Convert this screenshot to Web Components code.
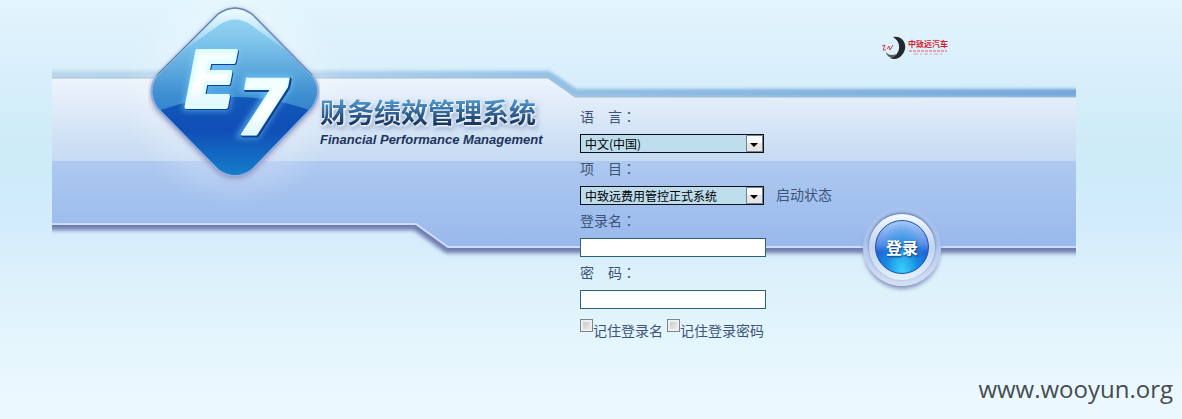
<!DOCTYPE html>
<html lang="zh-CN">
<head>
<meta charset="utf-8">
<title>财务绩效管理系统</title>
<style>
html, body { margin: 0; }
body { font-family: "Noto Sans CJK SC", sans-serif; font-size: 14px; color: #3d5478; }
</style>
</head>
<body>
<login-page>
  <brand-mark slot="brand"></brand-mark>
  <login-form slot="form">
    <form-field>
      <drop-down caption="语　言" options="中文(中国)"></drop-down>
    </form-field>
    <form-field>
      <drop-down caption="项　目" options="中致远费用管控正式系统"></drop-down>
      <a slot="aside" href="#status">启动状态</a>
    </form-field>
    <form-field>
      <text-box caption="登录名" type="text"></text-box>
    </form-field>
    <form-field>
      <text-box caption="密　码" type="password"></text-box>
    </form-field>
    <tick-box slot="options">记住登录名</tick-box>
    <tick-box slot="options">记住登录密码</tick-box>
  </login-form>
  <company-logo slot="side">中致远汽车</company-logo>
  <login-button slot="side">登录</login-button>
  <span slot="footer">www.wooyun.org</span>
</login-page>

<script>
function define(name, html, setup) {
  const template = document.createElement('template');
  template.innerHTML = html;
  customElements.define(name, class extends HTMLElement {
    connectedCallback() {
      if (this.shadowRoot) return;
      const root = this.attachShadow({ mode: 'open' });
      root.appendChild(template.content.cloneNode(true));
      if (setup) setup(this, root);
    }
  });
}

define('login-page', `
<style>
:host { display: flex; flex-direction: column; min-height: 100vh;
  background: linear-gradient(#e3f5fd 0, #d9effb 70px, #cdebf8 155px, #d4ecfc 230px, #def2fa 290px, #ebf8ff 400px); }
.stage { display: grid; grid-template-columns: 528px 283px 1fr; margin: 0 106px 0 52px; }
page-banner { grid-area: 1 / 1 / 2 / 4; }
.brand { grid-area: 1 / 1; }
.form { grid-area: 1 / 2; padding-top: 101px; }
.side { grid-area: 1 / 3; padding-top: 35px; }
.brand, .form, .side { position: relative; }
footer { margin-top: auto; padding: 0 9px 12px; text-align: right; color: #474c50;
  font: 24px/36px "Open Sans", "Noto Sans", sans-serif; }
</style>
<main class="stage">
  <page-banner></page-banner>
  <div class="brand"><slot name="brand"></slot></div>
  <div class="form"><slot name="form"></slot></div>
  <div class="side"><slot name="side"></slot></div>
</main>
<footer><slot name="footer"></slot></footer>`);

define('page-banner', `
<style>
:host { display: block; min-width: 0; overflow: hidden; }
svg { display: block; width: 100%; height: 340px; }
</style>
<svg aria-hidden="true">
  <defs>
    <linearGradient id="body" gradientUnits="userSpaceOnUse" x1="0" y1="78" x2="0" y2="248">
      <stop offset="0" stop-color="#edf4fc"/><stop offset=".488" stop-color="#c5daf2"/>
      <stop offset=".488" stop-color="#adc9f0"/><stop offset="1" stop-color="#99b8ec"/>
    </linearGradient>
    <linearGradient id="edge" gradientUnits="userSpaceOnUse" x1="0" y1="0" x2="1024" y2="0">
      <stop offset="0" stop-color="#a5c7df"/><stop offset=".5" stop-color="#8fbce4"/><stop offset="1" stop-color="#6fa5d8"/>
    </linearGradient>
    <linearGradient id="deep" gradientUnits="userSpaceOnUse" x1="250" y1="0" x2="1024" y2="0">
      <stop offset="0" stop-color="#8fbce4" stop-opacity="0"/><stop offset=".35" stop-color="#8ab8e1" stop-opacity=".7"/><stop offset="1" stop-color="#74a8d9"/>
    </linearGradient>
    <filter id="soft" x="-5%" y="-50%" width="110%" height="200%"><feGaussianBlur stdDeviation="2"/></filter>
    <filter id="fine" x="-5%" y="-50%" width="110%" height="200%"><feGaussianBlur stdDeviation="1"/></filter>
    <radialGradient id="glow"><stop offset=".5" stop-color="#fff" stop-opacity=".7"/><stop offset="1" stop-color="#fff" stop-opacity="0"/></radialGradient>
  </defs>
  <path d="M-20 75H495L522 93H4000" fill="none" stroke="url(#edge)" stroke-width="8" filter="url(#soft)" opacity=".65"/>
  <path d="M-20 75H497L524 93H4000" fill="none" stroke="url(#deep)" stroke-width="7" filter="url(#fine)"/>
  <path d="M-20 227H363L395 250H4000" fill="none" stroke="#6976ad" stroke-width="6" filter="url(#soft)"/>
  <path d="M-20 78H496L523 97H4000V247H395L363 225H-20Z" fill="url(#body)"/>
  <path d="M-20 78H496L523 97H4000" fill="none" stroke="#8aacca" stroke-opacity=".7"/>
  <path d="M-20 224H364L396 247H4000" fill="none" stroke="#cddcf8" stroke-width="2"/>
  <path d="M-20 226H363L395 249H4000" fill="none" stroke="#717fb0" stroke-width="2"/>
  <circle cx="183" cy="94" r="112" fill="url(#glow)" opacity=".45"/>
</svg>`);

define('brand-mark', `
<style>
:host { display: flex; padding-left: 96px; }
svg { flex: none; width: 172px; height: 190px; }
.name { padding-top: 94px; white-space: nowrap; }
h1 { margin: 0; font: bold 27px/36px "Noto Sans CJK SC", sans-serif;
  background: linear-gradient(#4c91c7 8px, #17355f 30px); -webkit-background-clip: text; background-clip: text; color: transparent;
  filter: drop-shadow(0 0 1px #fff) drop-shadow(1px 1px 1px #fff) drop-shadow(1px 2px 2px #8ba6cb); }
p { margin: 0; font: italic bold 13px/20px "Liberation Sans", Arial, sans-serif; color: #1d345c; }
text { font: italic bold 76px "DejaVu Sans", sans-serif; }
</style>
<svg viewBox="148 0 172 190" role="img" aria-label="E7">
  <defs>
    <linearGradient id="d" x1="0" y1="0" x2="0" y2="1">
      <stop offset="0" stop-color="#a5dcf5"/><stop offset=".2" stop-color="#83c8ec"/><stop offset=".5" stop-color="#3e8fd1"/>
      <stop offset=".68" stop-color="#2879c5"/><stop offset="1" stop-color="#2879c5"/>
    </linearGradient>
    <linearGradient id="l" x1="0" y1="0" x2="0" y2="1">
      <stop offset="0" stop-color="#1258b9"/><stop offset=".4" stop-color="#104eb6"/><stop offset="1" stop-color="#1683cc"/>
    </linearGradient>
    <linearGradient id="t" x1="0" y1="0" x2="0" y2="1">
      <stop offset="0" stop-color="#e9ffff"/><stop offset=".55" stop-color="#fff"/><stop offset="1" stop-color="#bff0ff"/>
    </linearGradient>
    <linearGradient id="h" x1="0" y1="0" x2="0" y2="1">
      <stop offset="0" stop-color="#f2fdff"/><stop offset="1" stop-color="#e2f8ff" stop-opacity="0"/>
    </linearGradient>
    <filter id="b" x="-30%" y="-30%" width="160%" height="160%"><feGaussianBlur stdDeviation="3"/></filter>
    <clipPath id="c"><path d="M218 14Q235 2 252 14L312 75Q324 91 312 108L252 170Q235 182 218 170L157 108Q146 91 157 75Z"/></clipPath>
  </defs>
  <path d="M218 14Q235 2 252 14L312 75Q324 91 312 108L252 170Q235 182 218 170L157 108Q146 91 157 75Z" fill="#8d86b4" filter="url(#b)" transform="translate(0 2)"/>
  <g clip-path="url(#c)">
    <path d="M148 0H322V190H148Z" fill="url(#d)"/>
    <path d="M148 115Q235 79 322 115V180H148Z" fill="url(#l)"/>
    <path d="M176 56L218 14Q235 2 252 14L294 56L251 25Q235 14 219 25Z" fill="url(#h)"/>
  </g>
  <path d="M218 14Q235 2 252 14L312 75Q324 91 312 108L252 170Q235 182 218 170L157 108Q146 91 157 75Z" fill="none" stroke="#8eaee0" stroke-width="2"/>
  <path d="M157 75L218 14Q235 2 252 14L312 75" fill="none" stroke="#607f9d"/>
  <g fill="#6dc9ff" stroke="#6dc9ff" stroke-width="7" filter="url(#b)" opacity=".7">
    <text x="185" y="107">E</text><text x="236" y="134">7</text>
  </g>
  <g fill="#123f94" stroke="#123f94" stroke-width="4" stroke-linejoin="round" transform="translate(1 1)">
    <text x="185" y="107">E</text><text x="236" y="134">7</text>
  </g>
  <g fill="url(#t)" stroke="#e2fdff" stroke-width="4" stroke-linejoin="round">
    <text x="185" y="107">E</text><text x="236" y="134" stroke-width="2">7</text>
  </g>
</svg>
<div class="name"><h1>财务绩效管理系统</h1><p>Financial Performance Management</p></div>`);

define('login-form', `
<style>
:host { display: block; }
.options { display: flex; gap: 4px; padding-top: 10px; }
</style>
<form id="login"><slot></slot><div class="options"><slot name="options"></slot></div></form>`);

define('form-field', `
<style>
:host { display: flex; align-items: flex-end; gap: 12px; height: 52px; white-space: nowrap; }
::slotted(a) { color: #3d5478; text-decoration: none; line-height: 22px; }
</style>
<slot></slot><slot name="aside"></slot>`);

const labelStyle = `
:host { display: block; }
label { display: block; padding-bottom: 2px; line-height: 31px; }
label .mark { font-family: "Noto Sans CJK TC", sans-serif; }`;
const labelMarkup = `<label for="control"><span class="caption"></span><span class="mark" lang="zh-TW">：</span></label>`;

define('drop-down', `
<style>${labelStyle}
.box { display: grid; width: 184px; }
select, svg { grid-area: 1 / 1; }
select { appearance: none; box-sizing: border-box; width: 100%; height: 19px; margin: 0; padding: 0 20px 0 4px;
  border: 1px solid #0a1119; border-radius: 0; background: #bddcec; color: #000;
  font: 12px/17px "Noto Sans CJK SC", sans-serif; }
svg { justify-self: end; width: 19px; height: 19px; pointer-events: none; }
</style>
${labelMarkup}
<div class="box">
  <select id="control"></select>
  <svg viewBox="0 0 19 19" aria-hidden="true">
    <path d="M1.500 1.500H17.500V17.500H1.500Z" fill="#e6e5e4" stroke="#77838a"/>
    <path d="M2 2H17V9H2Z" fill="#fafafa"/>
    <path d="M5 9H13L9 13Z" fill="#000"/>
  </svg>
</div>`, (host, root) => {
  root.querySelector('.caption').textContent = host.getAttribute('caption');
  for (const text of host.getAttribute('options').split('|')) root.querySelector('select').add(new Option(text));
});

define('text-box', `
<style>${labelStyle}
input { display: block; box-sizing: border-box; width: 186px; height: 19px; margin: 0; padding: 0 4px;
  border: 1px solid #2b6278; border-radius: 0; background: #fff; font: 12px/17px "Noto Sans CJK SC", sans-serif; }
</style>
${labelMarkup}
<input id="control">`, (host, root) => {
  root.querySelector('.caption').textContent = host.getAttribute('caption');
  root.querySelector('input').type = host.getAttribute('type');
});

define('tick-box', `
<style>
:host { display: block; white-space: nowrap; }
label { display: flex; align-items: flex-start; line-height: 22px; }
input { appearance: none; box-sizing: border-box; width: 13px; height: 13px; margin: 0; border: 1px solid #7f868a;
  background: linear-gradient(135deg, #bfc1c5, #f4f4f4); box-shadow: inset 0 0 0 2px #efefef; }
input:checked { background: #34699f; }
</style>
<label><input type="checkbox"><slot></slot></label>`);

define('company-logo', `
<style>
:host { display: flex; width: 70px; height: 26px; margin-left: 17px; align-items: flex-start; color: #d3212b;
  font: bold 8px/12px "Noto Sans CJK SC", sans-serif; white-space: nowrap; }
.mark { flex: none; width: 28px; height: 26px; }
.name { padding-top: 3px; }
.rule { display: block; width: 40px; height: 6px; }
</style>
<svg class="mark" viewBox="0 0 28 26" aria-hidden="true">
  <path d="M13 2C24 0 29 12 22 20C19 24 14 25 10 23C20 21 23 8 13 2Z" fill="#24272b"/>
  <path d="M12 23C8 22 6 19 6 17C8 20 11 21 17 19" fill="#55595d"/>
  <path d="M2 11L5 10L3 15H6M7 14L9 11L10 15L13 10" fill="none" stroke="#cb4654"/>
</svg>
<div class="name"><slot></slot>
<svg class="rule" viewBox="0 0 40 6" aria-hidden="true"><path d="M1 1H39" stroke="#d95c63" stroke-dasharray="3 1"/><path d="M6 4H34" stroke="#e39a9f" stroke-dasharray="4 2 2 2"/></svg></div>`);

define('login-button', `
<style>
:host { display: grid; justify-content: start; margin-top: 147px; }
.ring { display: grid; place-items: center; width: 78px; height: 78px; border-radius: 50%;
  background: linear-gradient(#a8c2ee 45%, #b9ccef 55%, #d5e0f5);
  box-shadow: 0 4px 4px -1px #8790bd; }
.rim { display: grid; place-items: center; width: 66px; height: 66px; border-radius: 50%;
  background: linear-gradient(#f4fbff, #c2d3ee 50%, #e4f0fb); box-shadow: 0 -1px 3px 0 #566e9c; }
button { box-sizing: border-box; width: 54px; height: 54px; padding: 0; border: 1px solid #1c50ac; border-radius: 50%;
  background: radial-gradient(ellipse at 50% 100%, #39d5fa 0, #1595e888 45%, transparent 70%), linear-gradient(#a9c9f8 0, #5a8ee6 45%, #2163d3 60%, #1487e0 100%);
  color: #fff; font: bold 16px/24px "Noto Sans CJK SC", sans-serif; text-shadow: 1px 1px 2px #103170; cursor: pointer; }
</style>
<div class="ring"><div class="rim"><button type="button"><slot></slot></button></div></div>`);
</script>
</body>
</html>
